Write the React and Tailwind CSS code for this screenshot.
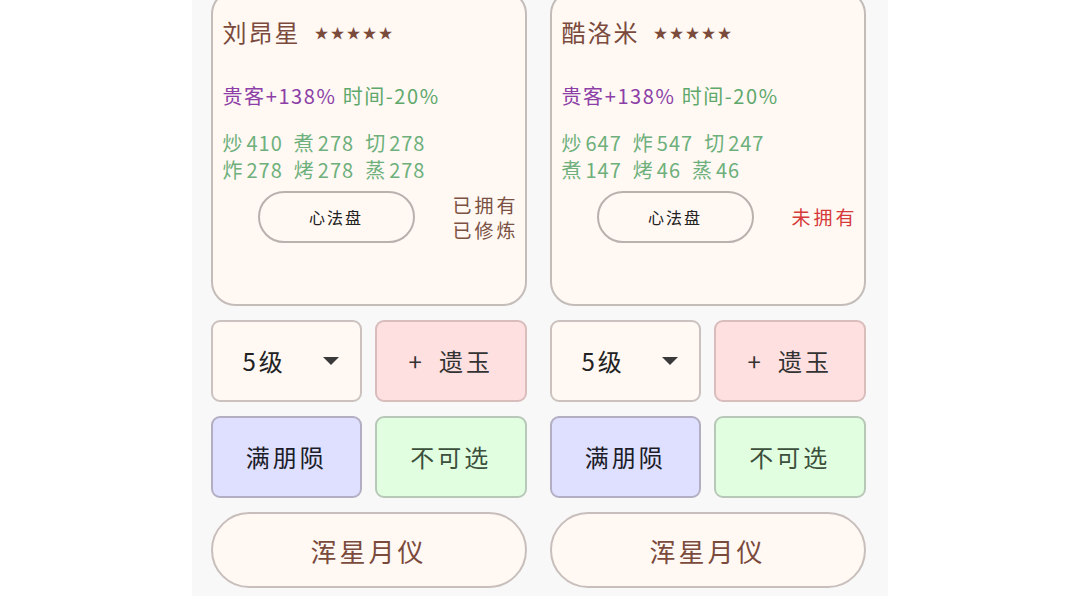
const chefs = [
  {
    name: "刘昂星",
    stats: [
      [["炒", 410], ["煮", 278], ["切", 278]],
      [["炸", 278], ["烤", 278], ["蒸", 278]],
    ],
    owned: true,
  },
  {
    name: "酷洛米",
    stats: [
      [["炒", 647], ["炸", 547], ["切", 247]],
      [["煮", 147], ["烤", 46], ["蒸", 46]],
    ],
    owned: false,
  },
];

function StatLine({ row }) {
  return (
    <div className="flex gap-[11px] leading-[27px]">
      {row.map(([skill, value]) => (
        <span key={skill} className="flex gap-[3px]">
          <span>{skill}</span>
          <span>{value}</span>
        </span>
      ))}
    </div>
  );
}

function ChefCard({ chef }) {
  return (
    <div className="flex flex-col gap-[14px]">
      <div className="h-[316px] rounded-[24px] border-2 border-[#c4bcb9] bg-[#fff8f3] pl-[10px] pr-[8px] pt-[24px]">
        <div className="flex items-center gap-[14px] text-[#7a4a3c]">
          <span className="text-[24px] leading-[32px] tracking-[2px]">{chef.name}</span>
          <span className="text-[14px] tracking-[2px]">★★★★★</span>
        </div>
        <p className="mt-[34px] text-[20px] leading-[28px] tracking-[1.6px]">
          <span className="text-[#8c3fa6]">贵客+138%</span>{" "}
          <span className="text-[#5ea86b]">时间-20%</span>
        </p>
        <div className="mt-[19px] text-[20px] tracking-[1px] text-[#6db07b]">
          {chef.stats.map((row, i) => (
            <StatLine key={i} row={row} />
          ))}
        </div>
        <div className="mt-[8px] flex items-center">
          <button className="ml-[35px] flex h-[52px] w-[157px] shrink-0 items-center justify-center rounded-full border-2 border-[#b9b1ae] bg-[#fff8f3] text-[16px] tracking-[2px] text-[#222]">
            心法盘
          </button>
          {chef.owned ? (
            <div className="ml-[38px] shrink-0 whitespace-nowrap text-[19px] leading-[25px] tracking-[3px] text-[#7a5142]">
              <p>已拥有</p>
              <p>已修炼</p>
            </div>
          ) : (
            <p className="ml-[38px] shrink-0 whitespace-nowrap text-[19px] tracking-[3px] text-[#d63a3a]">
              未拥有
            </p>
          )}
        </div>
      </div>

      <div className="grid grid-cols-2 gap-[13px]">
        <div className="flex h-[82px] items-center rounded-[9px] border-2 border-[#cbc2bf] bg-[#fff8f3] pl-[30px] pr-[20px] text-[24px] tracking-[3px] text-[#222]">
          <span className="flex-1">5级</span>
          <svg width="18" height="10" viewBox="0 0 18 10">
            <path d="M1 1h16L9 9z" fill="#3a3a3a" />
          </svg>
        </div>
        <div className="flex h-[82px] items-center justify-center gap-[14px] rounded-[9px] border-2 border-[#d9bcbc] bg-[#ffe0e0] text-[24px] tracking-[3px] text-[#333]">
          <span>+</span>
          <span>遗玉</span>
        </div>
      </div>

      <div className="grid grid-cols-2 gap-[13px]">
        <div className="flex h-[82px] items-center justify-center rounded-[9px] border-2 border-[#b3aec2] bg-[#dfe0ff] text-[24px] tracking-[3px] text-[#1c1c28]">
          满朋陨
        </div>
        <div className="flex h-[82px] items-center justify-center rounded-[9px] border-2 border-[#b8c8b8] bg-[#e1ffe0] text-[24px] tracking-[3px] text-[#3c4f3c]">
          不可选
        </div>
      </div>

      <button className="flex h-[76px] items-center justify-center rounded-full border-2 border-[#c8bfbc] bg-[#fff8f3] text-[26px] tracking-[3px] text-[#7a4a3c]">
        浑星月仪
      </button>
    </div>
  );
}

export default function App() {
  return (
    <div
      className="flex h-[606px] w-[1080px] justify-center overflow-hidden bg-white"
      style={{ fontFamily: '"Noto Sans CJK SC", "Noto Sans", sans-serif' }}
    >
      <div className="ml-[-1px] h-[596px] w-[696px] overflow-hidden bg-[#f8f8f8]">
        <div className="mt-[-10px] grid grid-cols-2 gap-[23px] pl-[19px] pr-[22px]">
          {chefs.map((c) => (
            <ChefCard key={c.name} chef={c} />
          ))}
        </div>
      </div>
    </div>
  );
}
